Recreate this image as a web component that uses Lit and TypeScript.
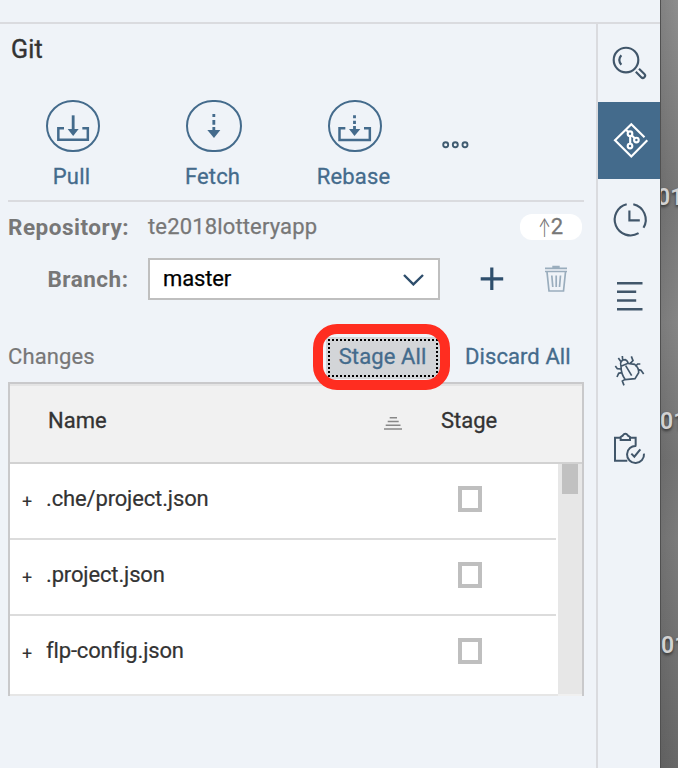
import { LitElement, html, css, svg } from "lit";
import { customElement } from "lit/decorators.js";

const pullIcon = svg`<g transform="scale(.33333)"><path d="M192 384.500H175V419H263.500V384.500H247"/><path class="shaft" d="M219.500 346V390" /><path class="fill" d="M203 387H236L219.500 408Z"/></g>`;
const fetchIcon = svg`<g transform="scale(.33333)"><path class="shaft" d="M641.500 342V351M641.500 360V374M641.500 381V393"/><path class="fill" d="M622 390H661L642 414Z"/></g>`;
const rebaseIcon = svg`<g transform="translate(300 80) scale(.33333)"><path d="M136 144.500H118.500V180H209.500V144.500H192"/><path class="shaft" d="M163.500 106V115M163.500 122V132M163.500 138V149"/><path class="fill" d="M147 147H181L163.500 168Z"/></g>`;

const navItems = [
  { name: "search", top: 24, height: 78, icon: svg`<circle cx="626" cy="60" r="12.300"/><path d="M621.300 55.300Q617.300 60 621.300 64.700M635.800 71.800L641.200 77.200A2.250 2.250 0 0 0 644.400 74L639 68.800"/>` },
  { name: "git", top: 102, height: 77, icon: svg`<path d="M644.500 137.300L631.300 124.200L615 140.300L631.300 156.500L647.300 140.300M625.500 129.500L628.400 132M630.200 136V143.500M631.900 135.500L634.700 138.300"/><circle cx="630" cy="133.700" r="2.300"/><circle cx="636.400" cy="140" r="2.300"/><circle cx="630" cy="146" r="2.300"/>` },
  { name: "history", top: 179, height: 79, icon: svg`<path d="M633.300 204.300A15.800 15.800 0 0 1 643.500 227.800M638.600 233.200A15.800 15.800 0 1 1 626.700 204.300M629.400 210.500V220.400H639.800"/>` },
  { name: "outline", top: 258, height: 77, icon: svg`<path class="bars" d="M617 283.300H642.500M617 291.700H636.200M617 300.500H636.200M617 309.300H642.500"/>` },
  { name: "debug", top: 335, height: 75, icon: svg`<g class="traced bug" transform="translate(590 250) scale(.33333)"><path d="M93 349C88 336 96 329 106 329Q114 333 114 340M93 349L114 340L134 343Q147 353 146 368L135 386L106 389Q93 373 93 349M107 347L125 377M98 330L97 318M92 334L85 324M121 340L129 332L124 319M136 349L143 342H151M145 359L153 361L161 372M92 357L82 356L76 348M95 368L86 370L81 381M105 388L97 393L102 406"/></g>` },
  { name: "tasks", top: 410, height: 78, icon: svg`<g class="traced" transform="translate(590 250) scale(.33333)"><path d="M92 563H75V632H112M120 563H137V587M92 570V561L98 557Q106 546 114 557L120 561V570ZM139 588A25.500 25.500 0 1 0 162 611M124 611L133 620L151 598"/></g>` },
];

@customElement("git-row")
class GitRow extends LitElement {
  static properties = { name: { type: String } };
  declare name: string;
  static styles = css`
    :host { display: grid; grid-template-columns: 36px 412px 24px; align-items: center; height: 76px; color: #333; font: 22px/26px Roboto, sans-serif; border-bottom: 2px solid #dcdcdc; width: 546px; }
    :host(:last-child) { border-bottom-color: #fff; }
    .expand { font-size: 18px; padding: 2px 0 0 12px; line-height: 22px; }
    .name { letter-spacing: -.15px; padding-bottom: 4px; -webkit-text-stroke: .2px; }
    .box { box-sizing: border-box; width: 24px; height: 26px; border: 4px solid #bfbfbf; margin-top: -4px; }
  `;
  render() {
    return html`<span class="expand">+</span><span class="name">${this.name}</span><span class="box"></span>`;
  }
}

@customElement("app-root")
class AppRoot extends LitElement {
  static styles = css`
    * { box-sizing: border-box; }
    :host { display: grid; grid-template-columns: 660px 18px; width: 678px; height: 768px; overflow: hidden; background: #eff3f8; font: 22px/26px Roboto, sans-serif; color: #777; }
    svg { display: block; fill: none; stroke: #446b8c; stroke-width: 2; flex: none; }
    .app { display: grid; grid-template: 24px 744px / 598px 62px; }
    .top { grid-column: 1 / 3; border-bottom: 2px solid #dadbdf; }
    .panel { border-right: 2px solid #dadbdf; padding-left: 8px; width: 598px; }
    .title { margin: 0; padding: 12px 0 0 3px; height: 76px; font-size: 25px; line-height: 28px; font-weight: 400; letter-spacing: .2px; color: #333; -webkit-text-stroke: .4px; }
    .tools { display: flex; width: 576px; height: 102px; border-bottom: 2px solid #dadbdf; margin: 0; }
    .tool { width: 141px; text-align: center; color: #446b8c; margin-left: -6px; margin-right: 6px; -webkit-text-stroke: .3px; }
    .tool svg { height: 52px; width: 141px; stroke-width: 7.500; }
    .tool .ring { stroke-width: 2; }
    .tool .label { display: block; margin-top: 12px; padding-right: 2px; letter-spacing: .15px; }
    .tool .shaft { stroke-width: 8.500; }
    .tool .fill { fill: #446b8c; stroke: none; }
    .more { margin: 38px 0 0 11px; stroke: #3f5b70; stroke-width: 1.900; }
    .line { display: flex; align-items: center; width: 576px; }
    .repo { height: 50px; }
    .key { width: 122px; text-align: right; font-weight: 700; font-size: 22.500px; margin-right: 18px; letter-spacing: .5px; padding-right: 1.500px; white-space: nowrap; }
    .value { flex: 1; letter-spacing: .15px; -webkit-text-stroke: .25px; }
    .pill { width: 62px; height: 26px; background: #fff; border-radius: 12px; margin-right: 2px; display: flex; justify-content: center; -webkit-text-stroke: .3px; }
    .up { font-family: Inter, sans-serif; font-weight: 300; font-size: 25px; display: block; margin: 0 -4px 0 -5px; transform: scaleX(.6); -webkit-text-stroke: 0; padding-top: 1px; }
    .branch { height: 54px; }
    .select { width: 292px; height: 42px; border: 2px solid #bfbfbf; background: #fff; color: #000; display: flex; align-items: center; justify-content: space-between; padding: 0 14px 0 13px; margin-right: 40px; letter-spacing: -.15px; -webkit-text-stroke: .25px; }
    .plus { stroke: #2e4e6c; stroke-width: 3.200; margin-right: 40px; }
    .chev { stroke: #2e4e6c; stroke-width: 2.400; }
    .trash { stroke: #9aadbd; stroke-width: 1.700; }
    .changes { height: 76px; padding-top: 27px; position: relative; }
    .changes .label { flex: 1; letter-spacing: .1px; margin-top: -2px; -webkit-text-stroke: .2px; }
    .action { color: #446b8c; -webkit-text-stroke: .3px; }
    .stage { width: 114px; height: 42px; padding: 2px; background: #d3d5d8; margin-right: 25px; }
    .dots { width: 110px; height: 38px; border: 2px dotted #000; text-align: center; line-height: 32px; letter-spacing: .1px; padding-right: 1px; }
    .discard { width: 119px; letter-spacing: .08px; margin-top: -2px; }
    .mark { position: absolute; left: 305px; top: 18px; width: 137px; height: 66px; border: 10px solid #ff2d20; border-radius: 24px; z-index: 2; }
    .table { width: 576px; height: 314px; border: 2px solid #c9c9cb; border-bottom: 0; background: #fff; }
    .head { height: 80px; background: #f1f1f1; border-top: 2px solid #e4e4e4; border-bottom: 2px solid #d2d2d2; display: grid; grid-template-columns: 335px 58px 1fr; padding: 0 0 6px 38px; align-items: center; color: #333; -webkit-text-stroke: .3px; }
    .sort { stroke: #888; stroke-width: 1.500; margin-top: 3px; }
    .body { display: flex; height: 232px; overflow: hidden; }
    .rows { width: 548px; height: 232px; border-bottom: 2px solid #e6e6e6; overflow: hidden; }
    .track { width: 24px; height: 232px; background: #e7e7e7; border-bottom: 2px solid #f0f0f0; padding-left: 4px; }
    .thumb { width: 16px; height: 30px; background: #c1c1c1; }
    .nav svg { stroke: #41566a; stroke-width: 2.150; }
    .nav svg.git { background: #446b8c; stroke: #fff; }
    .nav .traced { stroke-width: 6; }
    .nav .bug { stroke-width: 5; }
    .nav .bars { stroke-width: 2.500; }
    .desk { border-left: 1px solid #505050; background: linear-gradient(90deg, rgba(0,0,0,.08), transparent), linear-gradient(#8d8d8d, #777 25%, #858585 42%, #747474 60%, #7b7b7b 70%, #686868); overflow: hidden; color: #d2d2d2; font-weight: 600; font-size: 23px; line-height: 28px; text-shadow: 0 2px 3px #333; padding-top: 184px; white-space: nowrap; }
    .file { height: 224px; margin-left: -4px; }
    .file + .file { margin-left: -1px; }
    .file + .file + .file { margin-left: 0; }
  `;
  render() {
    return html`
      <div class="app">
        <div class="top"></div>
        <main class="panel">
          <h1 class="title">Git</h1>
          <div class="tools">
            <div class="tool"><svg viewBox="2 100 141 52"><rect class="ring" x="47" y="101" width="52" height="50" rx="25.500"/>${pullIcon}</svg><span class="label">Pull</span></div>
            <div class="tool"><svg viewBox="143 100 141 52"><rect class="ring" x="187" y="101" width="54" height="50" rx="25.500"/>${fetchIcon}</svg><span class="label">Fetch</span></div>
            <div class="tool"><svg viewBox="284 100 141 52"><rect class="ring" x="329" y="101" width="52" height="50" rx="25.500"/>${rebaseIcon}</svg><span class="label">Rebase</span></div>
            <svg class="more" width="28" height="14" viewBox="442 138 28 14"><circle cx="445.700" cy="144.700" r="2.500"/><circle cx="455.300" cy="144.700" r="2.500"/><circle cx="465" cy="144.700" r="2.500"/></svg>
          </div>
          <div class="line repo"><span class="key">Repository:</span><span class="value">te2018lotteryapp</span><span class="pill"><span class="up">↑</span>2</span></div>
          <div class="line branch">
            <span class="key">Branch:</span>
            <div class="select"><span>master</span><svg class="chev" width="22" height="14" viewBox="402 272 22 14"><path d="M404 275L413.400 284.400L423 275"/></svg></div>
            <svg class="plus" width="24" height="24" viewBox="480 267 24 24"><path d="M480.700 278.800H503.200M491.800 267.500V290"/></svg>
            <svg class="trash" width="24" height="28" viewBox="544 265 24 28"><path d="M545 268.300H567M545 271.500H567M552.300 266.700H559.700M547 272L549 291H563.500L565.500 272M551.800 275.500L552.800 287M556.200 275.500V287M560.500 275.500L559.500 287"/></svg>
          </div>
          <div class="line changes"><span class="label">Changes</span><div class="action stage"><div class="dots">Stage All</div></div><span class="action discard">Discard All</span><div class="mark"></div></div>
          <div class="table">
            <div class="head"><span>Name</span><svg class="sort" width="20" height="14" viewBox="383 415 20 14"><path d="M389.700 416.700H397M387.700 420.400H398.700M385.700 424.200H400.500M384 428H402"/></svg><span>Stage</span></div>
            <div class="body">
              <div class="rows"><git-row name=".che/project.json"></git-row><git-row name=".project.json"></git-row><git-row name="flp-config.json"></git-row></div>
              <div class="track"><div class="thumb"></div></div>
            </div>
          </div>
        </main>
        <nav class="nav">${navItems.map((n) => html`<svg class=${n.name} width="62" height=${n.height} viewBox="598 ${n.top} 62 ${n.height}">${n.icon}</svg>`)}</nav>
      </div>
      <aside class="desk"><div class="file">01</div><div class="file">01</div><div class="file">01</div></aside>`;
  }
}
